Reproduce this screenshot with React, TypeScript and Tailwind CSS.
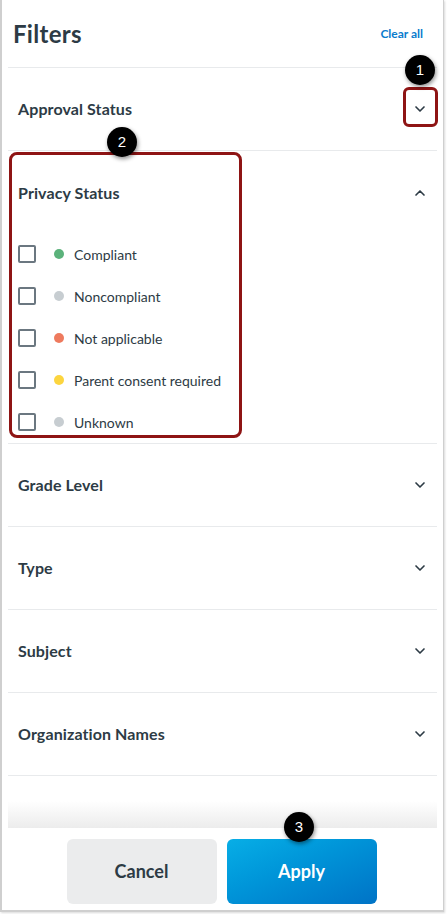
import { ChevronDown, ChevronUp } from 'lucide-react'

const font = { fontFamily: 'Lato, "Noto Sans", sans-serif' }

const privacy = [
  { label: 'Compliant', dot: 'bg-[#5bb27b]' },
  { label: 'Noncompliant', dot: 'bg-[#c7cdd1]' },
  { label: 'Not applicable', dot: 'bg-[#ee7a5e]' },
  { label: 'Parent consent required', dot: 'bg-[#fcd53f]' },
  { label: 'Unknown', dot: 'bg-[#c7cdd1]' },
]

function Badge({ n, className }: { n: number; className: string }) {
  return (
    <div
      className={`absolute w-[30px] h-[30px] rounded-full bg-black text-white text-[15px] flex items-center justify-center shadow-[1px_2px_4px_rgba(0,0,0,0.45)] ${className}`}
      style={{ fontFamily: '"Liberation Sans", Arial, sans-serif' }}
    >
      {n}
    </div>
  )
}

function Section({ title }: { title: string }) {
  return (
    <div className="h-[83px] border-b border-[#e8eaec] flex items-center justify-between pl-[10px] pr-[9px]">
      <span className="text-[16px] font-bold text-[#2d3b45] tracking-[0.1px]">{title}</span>
      <ChevronDown className="w-[16px] h-[16px] text-[#2d3b45]" strokeWidth={2.5} />
    </div>
  )
}

export default function App() {
  return (
    <div className="w-[447px] h-[914px] bg-white relative" style={font}>
      <div className="w-[444px] h-[912px] border-l-2 border-r border-b-2 border-[#cfcfcf] shadow-[1px_1px_2px_rgba(0,0,0,0.15)] flex flex-col">
        <div className="flex-1 flex flex-col px-[6px]">
          {/* Header */}
          <div className="h-[68px] border-b border-[#e8eaec] flex items-center justify-between pl-[5px] pr-[14px]">
            <h1 className="text-[24px] font-bold text-[#2d3b45] tracking-[0.3px]">Filters</h1>
            <button className="text-[12px] font-bold text-[#0a7ccd]">Clear all</button>
          </div>

          <Section title="Approval Status" />

          {/* Privacy Status expanded */}
          <div className="h-[293px] border-b border-[#e8eaec] flex flex-col pl-[10px] pr-[9px]">
            <div className="h-[83px] flex items-center justify-between pt-[1px]">
              <span className="text-[16px] font-bold text-[#2d3b45] tracking-[0.1px]">Privacy Status</span>
              <ChevronUp className="w-[16px] h-[16px] text-[#2d3b45]" strokeWidth={2.5} />
            </div>
            <div className="flex flex-col">
              {privacy.map(p => (
                <div key={p.label} className="h-[42px] flex items-center">
                  <div className="w-[18px] h-[18px] border-2 border-[#6b7780] rounded-[2px]" />
                  <div className={`w-[10px] h-[10px] rounded-full ml-[18px] ${p.dot}`} />
                  <span className="ml-[10px] text-[14px] text-[#2d3b45]">{p.label}</span>
                </div>
              ))}
            </div>
          </div>

          <Section title="Grade Level" />
          <Section title="Type" />
          <Section title="Subject" />
          <Section title="Organization Names" />

          <div className="flex-1 flex flex-col justify-end">
            <div className="h-[27px] bg-gradient-to-b from-white to-[#ececec]" />
          </div>
        </div>

        {/* Footer */}
        <div className="h-[82px] flex justify-center gap-[10px] pt-[11px] pr-[2px]">
          <button className="w-[150px] h-[65px] rounded-[6px] bg-[#ebeced] text-[#2d3b45] text-[18px] font-bold">Cancel</button>
          <button className="w-[150px] h-[65px] rounded-[6px] bg-gradient-to-br from-[#08aee6] to-[#0073c6] text-white text-[18px] font-bold">Apply</button>
        </div>
      </div>

      {/* Annotations */}
      <div className="absolute left-[403px] top-[87px] w-[35px] h-[40px] border-[3px] border-[#8e1414] rounded-[6px]" />
      <div className="absolute left-[9px] top-[152px] w-[233px] h-[286px] border-[3px] border-[#8e1414] rounded-[8px]" />
      <Badge n={1} className="left-[405px] top-[55px]" />
      <Badge n={2} className="left-[107px] top-[127px]" />
      <Badge n={3} className="left-[284px] top-[812px]" />
    </div>
  )
}
